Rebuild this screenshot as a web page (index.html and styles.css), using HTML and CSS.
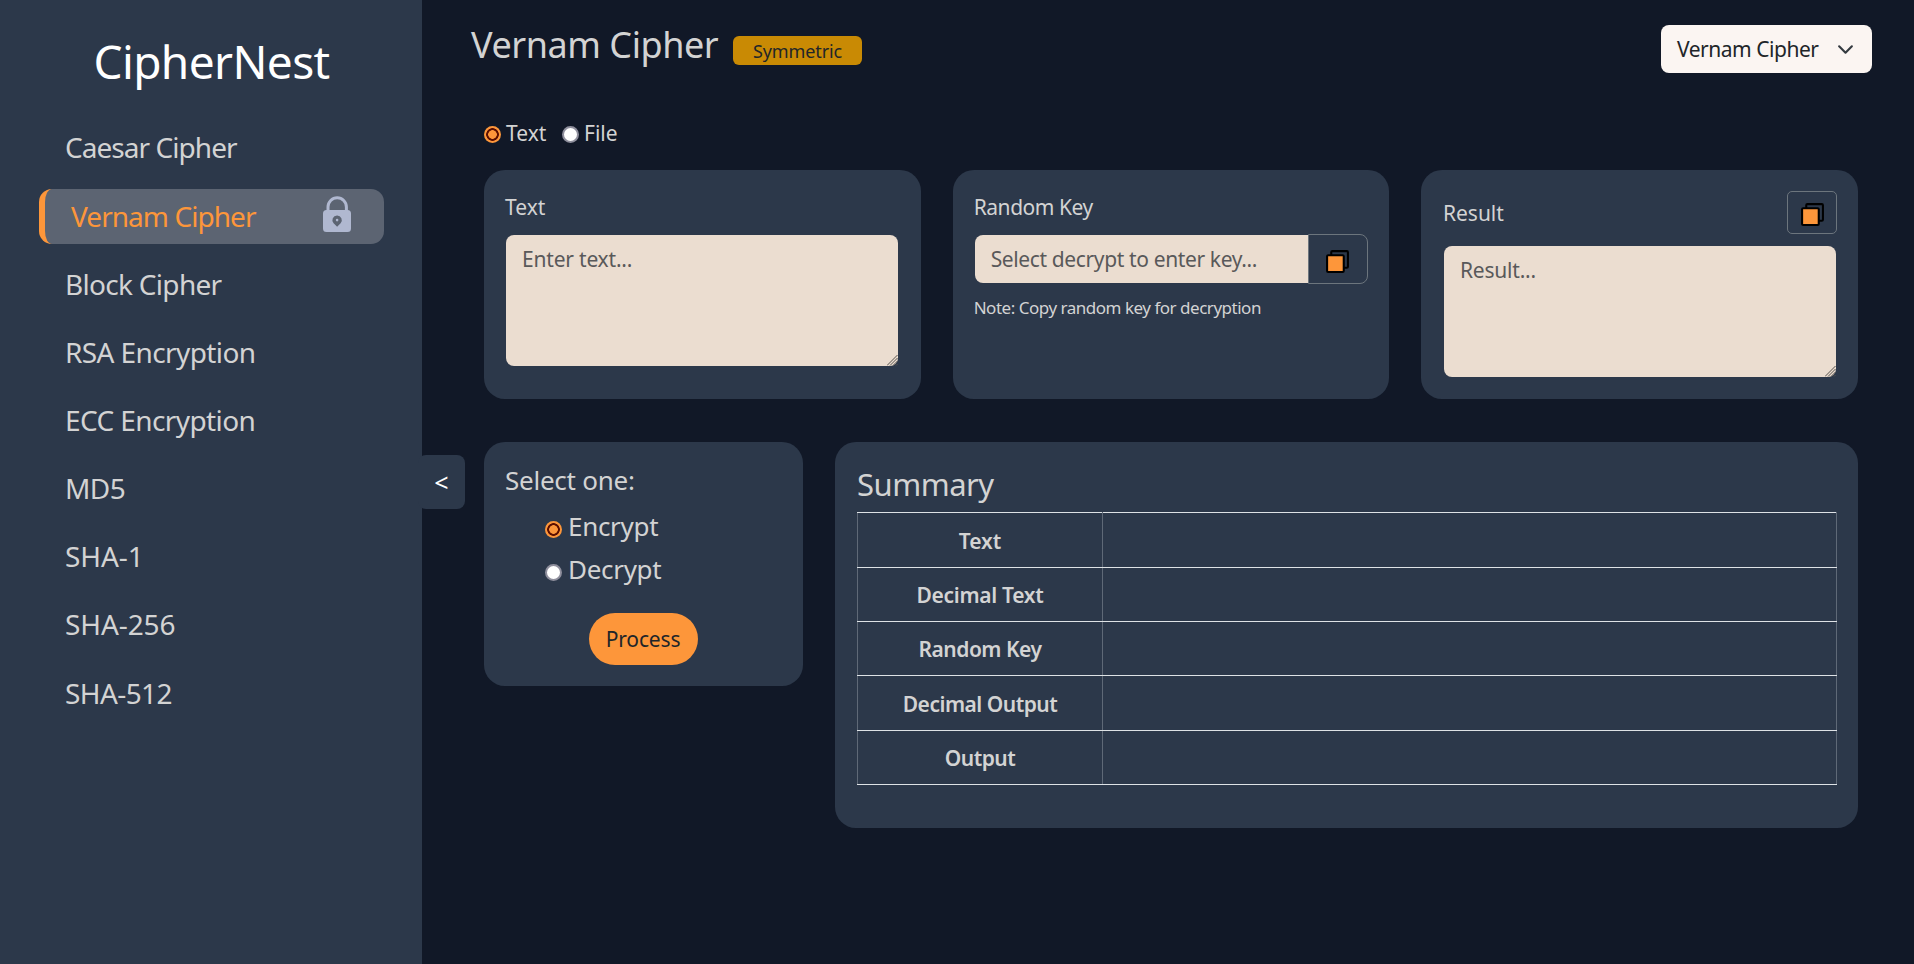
FILE: index.html
```html
<!DOCTYPE html>
<html lang="en">
<head>
<meta charset="utf-8">
<title>CipherNest</title>
<link rel="stylesheet" href="styles.css">
</head>
<body>
<div class="app">
  <aside class="sidebar">
    <h1 class="brand">CipherNest</h1>
    <nav class="nav">
      <a class="nav-item">Caesar Cipher</a>
      <a class="nav-item active"><span>Vernam Cipher</span>
        <svg class="lock" viewBox="0 0 28 36"><path d="M5 15V11a9.2 9.2 0 0 1 18.400 0V15" fill="none" stroke="#b0b8d0" stroke-width="3"/><path fill-rule="evenodd" fill="#b0b8d0" d="M4 14H24.500A3.500 3.500 0 0 1 28 17.500V32.500A3.500 3.500 0 0 1 24.500 36H3.500A3.500 3.500 0 0 1 0 32.500V17.500A3.500 3.500 0 0 1 3.500 14ZM14 19.500A4.600 4.600 0 0 0 10.600 27.200L14.100 30.800L17.600 27.200A4.600 4.600 0 0 0 14 19.500Z"/><circle cx="14.100" cy="24.100" r="1.300" fill="#b0b8d0"/></svg>
      </a>
      <a class="nav-item block">Block Cipher</a>
      <a class="nav-item algo">RSA Encryption</a>
      <a class="nav-item algo">ECC Encryption</a>
      <a class="nav-item algo">MD5</a>
      <a class="nav-item sha">SHA-1</a>
      <a class="nav-item sha">SHA-256</a>
      <a class="nav-item algo">SHA-512</a>
    </nav>
    <button class="toggle">&lt;</button>
  </aside>
  <main class="main">
    <header class="header">
      <h2 class="title">Vernam Cipher</h2>
      <span class="badge">Symmetric</span>
      <div class="select"><span>Vernam Cipher</span>
        <svg class="chevron" viewBox="0 0 16 16"><path d="m2 5 6 6 6-6" fill="none" stroke="#343a40" stroke-width="2" stroke-linecap="round" stroke-linejoin="round"/></svg>
      </div>
    </header>
    <div class="modes">
      <i class="radio on"></i><span class="mode-label">Text</span>
      <i class="radio second"></i><span class="mode-label">File</span>
    </div>
    <section class="cards">
      <div class="card">
        <div class="label">Text</div>
        <div class="area-wrap"><textarea class="area" placeholder="Enter text..."></textarea><svg class="grip" viewBox="0 0 11 11"><path d="M0 10.500L10.500 0M3 10.500L10.500 3M6 10.500L10.500 6M9 10.500L10.500 9" stroke="#55514d" stroke-width="1"/></svg></div>
      </div>
      <div class="card">
        <div class="label key-label">Random Key</div>
        <div class="group">
          <input class="key" placeholder="Select decrypt to enter key...">
          <button class="copy joined"><svg class="copy-icon" viewBox="0 0 24 24"><rect x="6" y="2" width="16" height="16" rx="1" fill="none" stroke="#000" stroke-width="2"/><rect x="2" y="6" width="16" height="16" rx="1" fill="#fd963a" stroke="#000" stroke-width="2"/></svg></button>
        </div>
        <p class="note">Note: Copy random key for decryption</p>
      </div>
      <div class="card result">
        <div class="result-head">
          <div class="label">Result</div>
          <button class="copy"><svg class="copy-icon" viewBox="0 0 24 24"><rect x="6" y="2" width="16" height="16" rx="1" fill="none" stroke="#000" stroke-width="2"/><rect x="2" y="6" width="16" height="16" rx="1" fill="#fd963a" stroke="#000" stroke-width="2"/></svg></button>
        </div>
        <div class="area-wrap"><textarea class="area" placeholder="Result..."></textarea><svg class="grip" viewBox="0 0 11 11"><path d="M0 10.500L10.500 0M3 10.500L10.500 3M6 10.500L10.500 6M9 10.500L10.500 9" stroke="#55514d" stroke-width="1"/></svg></div>
      </div>
    </section>
    <section class="lower">
      <div class="card action">
        <div class="select-one">Select one:</div>
        <div class="option"><i class="radio on"></i><span>Encrypt</span></div>
        <div class="option"><i class="radio"></i><span>Decrypt</span></div>
        <button class="process">Process</button>
      </div>
      <div class="card summary">
        <h3 class="summary-title">Summary</h3>
        <table class="table">
          <tr class="tall"><th>Text</th><td></td></tr>
          <tr><th class="tight">Decimal Text</th><td></td></tr>
          <tr><th class="tighter">Random Key</th><td></td></tr>
          <tr class="tall"><th class="tighter">Decimal Output</th><td></td></tr>
          <tr><th class="tighter">Output</th><td></td></tr>
        </table>
      </div>
    </section>
  </main>
</div>
</body>
</html>
```

FILE: styles.css
```css
* { box-sizing: border-box; }
body { margin: 0; background: #111827; color: #d3d3d3; font-family: "Noto Sans", sans-serif; font-size: 21px; overflow: hidden; }
h1, h2, h3, p { margin: 0; font-weight: 400; }
button, input, textarea { font-family: inherit; margin: 0; }
.app { display: flex; height: 964px; }

.sidebar { position: relative; width: 422px; flex: none; background: #2c384a; padding: 30px 38px 0 39px; }
.brand { font-size: 46px; line-height: 62px; color: #fff; text-align: center; letter-spacing: -0.6px; }
.nav { display: flex; flex-direction: column; gap: 13.5px; margin-top: 29px; }
.nav-item { display: flex; align-items: center; justify-content: space-between; height: 54.67px; padding: 0 33px 2px 26px; font-size: 28px; white-space: nowrap; letter-spacing: -0.95px; }
.nav-item.block { letter-spacing: -0.7px; }
.nav-item.algo { letter-spacing: -0.6px; }
.nav-item.sha { letter-spacing: -0.1px; }
.nav-item.active { background: #5c6472; color: #fd963a; border-left: 6px solid #fd963a; border-radius: 13px; padding-bottom: 0; }
.lock { width: 28px; height: 36px; margin-bottom: 4px; }
.toggle { position: absolute; left: 418px; top: 455px; width: 47px; height: 54px; border: 0; border-radius: 8px; background: #2c384a; color: #fff; font-size: 25px; padding: 0; }

.main { flex: 1; padding: 0 56px 0 62px; }
.header { display: flex; height: 90px; margin: 0 -14px 0 -13px; }
.title { font-size: 36px; line-height: 50px; margin-top: 20px; width: 262px; white-space: nowrap; letter-spacing: -0.45px; }
.badge { width: 129px; height: 29px; margin-top: 36px; border-radius: 6px; background: #c98a04; color: #212529; font-size: 18px; line-height: 31px; text-align: center; letter-spacing: -0.1px; }
.select { display: flex; align-items: center; justify-content: space-between; width: 211px; height: 48px; margin: 25px 0 0 auto; padding: 0 18px 0 16px; border-radius: 8px; background: #fbf5f2; color: #212529; white-space: nowrap; letter-spacing: -0.47px; }
.chevron { width: 17px; height: 17px; }

.modes { display: flex; align-items: center; height: 28px; margin: 30px 0 22px; }
.mode-label { margin-left: 5px; width: 40px; line-height: 28px; margin-bottom: 2px; }
.radio { flex: none; width: 17px; height: 17px; border-radius: 50%; border: 2px solid #8f8f9d; background: #fff; }
.radio.on { border: 0; background: radial-gradient(circle, #fd963a 4px, #5c0f00 4.600px, #5c0f00 6px, #fd963a 6.600px); }
.radio.second { margin-left: 16px; }

.cards { display: grid; grid-template-columns: repeat(3, 1fr); gap: 32px; height: 229px; }
.card { background: #2c384a; border-radius: 21px; padding: 21px 21px 0 22px; }
.card.result { padding-left: 22.6px; padding-right: 20.6px; }
.label { line-height: 32px; white-space: nowrap; margin-left: -1px; }
.key-label { letter-spacing: -0.45px; }
.area-wrap { position: relative; width: 392px; margin-top: 12px; }
.area { display: block; width: 392px; height: 131px; padding: 8px 16px; border: 0; border-radius: 8px; background: #ebddd0; font-size: 21px; line-height: 32px; letter-spacing: -0.2px; resize: none; }
.grip { position: absolute; right: 0; bottom: 0; width: 11px; height: 11px; }
::placeholder { color: #59595a; opacity: 1; }
.group { display: flex; align-items: center; margin-top: 11px; height: 50px; }
.key { width: 333px; height: 48px; padding: 0 16px; border: 0; border-radius: 8px 0 0 8px; background: #ebddd0; font-size: 21px; letter-spacing: -0.37px; }
.copy { display: flex; align-items: center; justify-content: center; width: 50px; height: 43px; padding: 3px 0 0; border: 1px solid #6c757d; border-radius: 5px; background: transparent; }
.copy.joined { width: 60px; height: 50px; padding: 5px 0 0; border-radius: 0 8px 8px 0; }
.copy-icon { width: 25px; height: 25px; }
.note { margin: 11px 0 0 -1px; font-size: 17px; line-height: 26px; white-space: nowrap; letter-spacing: -0.48px; }
.result-head { display: flex; justify-content: space-between; align-items: center; height: 43px; }
.result-head .label { margin-top: 1px; }

.lower { display: flex; align-items: flex-start; gap: 32px; margin-top: 43px; }
.action { width: 319px; height: 244px; display: flex; flex-direction: column; }
.select-one { font-size: 26px; line-height: 34px; margin-left: -1px; letter-spacing: -0.25px; }
.option { display: flex; align-items: center; gap: 6px; height: 43px; padding-left: 39px; font-size: 26px; line-height: 36px; letter-spacing: -0.3px; }
.option span { margin-bottom: 2px; }
.select-one + .option { margin-top: 8px; }
.option .radio { margin-top: 5px; }
.process { align-self: center; width: 109px; height: 52px; margin: 22px 2px 0 0; padding: 0; border: 0; border-radius: 26px; background: #fd963a; color: #212529; font-size: 21px; line-height: 52px; letter-spacing: -0.15px; }
.summary { flex: 1; height: 386px; }
.summary-title { font-size: 31px; line-height: 40px; padding-top: 1px; margin-bottom: 8px; letter-spacing: -0.5px; }
.table { width: 980px; table-layout: fixed; border-collapse: collapse; }
.table th { width: 245px; font-weight: 600; }
.table th, .table td { height: 54px; padding: 1px 0 0; border: 1px solid #dee2e6; border-left-color: #5f6977; border-right-color: #5f6977; }
.table .tall th, .table .tall td { height: 55px; }
.table .tight { letter-spacing: -0.3px; }
.table .tighter { letter-spacing: -0.5px; }
```
